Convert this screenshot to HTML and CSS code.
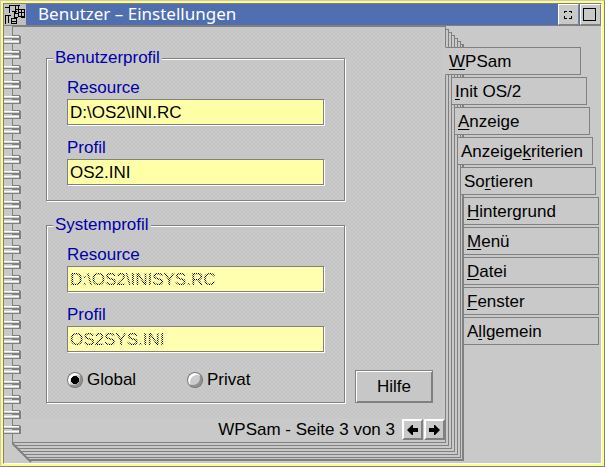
FILE: index.html
```html
<!DOCTYPE html>
<html lang="de">
<head>
<meta charset="utf-8">
<title>Benutzer – Einstellungen</title>
<link rel="stylesheet" href="styles.css">
</head>
<body>
<div class="window">
  <div class="frame">
    <header class="titlebar">
      <button class="sysmenu" type="button" aria-label="Systemmenü">
        <svg width="22" height="21" viewBox="0 0 22 21" shape-rendering="crispEdges" fill="none" stroke="#000">
          <path d="M5.500 1V9M5 1.500H16M1.500 20V11.500H7M1 3.500H5M11.500 1V9.500H14M11 5.500H20.500V13.500H16.500M14.500 1V12M14.500 8.500H19.500M14 12.500H19.500M7.500 7.500H13M10.500 7V13.500H13.500M7.500 14.500H12.500V20M7.500 14V20M7.500 17.500H12.500M7.500 19.500H12.500M4.500 11V19M17.500 5V12"/>
        </svg>
      </button>
      <h1 class="title">Benutzer – Einstellungen</h1>
      <button class="control" type="button" aria-label="Minimieren">
        <svg width="19" height="19" viewBox="0 0 19 19" shape-rendering="crispEdges" fill="none" stroke="#000">
          <path d="M5.500 8V6.500H8M10 6.500H12.500V8M12.500 11V13.500H10M8 13.500H5.500V11"/>
        </svg>
      </button>
      <button class="control" type="button" aria-label="Maximieren">
        <svg width="19" height="19" viewBox="0 0 19 19" shape-rendering="crispEdges" fill="none" stroke="#000">
          <path d="M2.500 3.500H14.500V15.500H2.500Z"/>
        </svg>
      </button>
    </header>

    <main class="notebook">
      <div class="book">
        <div class="sheet s6"></div>
        <div class="sheet s5"></div>
        <div class="sheet s4"></div>
        <div class="sheet s3"></div>
        <div class="sheet s2"></div>
        <div class="sheet s1"></div>
        <svg class="corner" width="20" height="20" viewBox="0 0 20 20" aria-hidden="true"><path d="M0 0L19 19" stroke="#808080" stroke-width="2"/></svg>
        <form class="page">
          <div class="content">
            <fieldset class="group">
              <legend>Benutzerprofil</legend>
              <label for="u-res">Resource</label>
              <div class="field"><input id="u-res" type="text" value="D:\OS2\INI.RC"></div>
              <label for="u-prof">Profil</label>
              <div class="field"><input id="u-prof" type="text" value="OS2.INI"></div>
            </fieldset>
            <div class="row">
              <fieldset class="group">
                <legend>Systemprofil</legend>
                <label for="s-res">Resource</label>
                <div class="field off"><input id="s-res" type="text" value="D:\OS2\INISYS.RC" disabled></div>
                <label for="s-prof">Profil</label>
                <div class="field off"><input id="s-prof" type="text" value="OS2SYS.INI" disabled></div>
                <div class="radios">
                  <label class="radio"><input type="radio" name="scope" checked>Global</label>
                  <label class="radio"><input type="radio" name="scope">Privat</label>
                </div>
              </fieldset>
              <button class="help" type="button">Hilfe</button>
            </div>
          </div>
          <footer class="pager">
            <span class="status">WPSam - Seite 3 von 3</span>
            <button class="arrow" type="button" aria-label="Vorherige Seite">
              <svg width="12" height="10" viewBox="0 0 12 10"><path d="M0 5L5 0H6V3H11V7H6V10H5Z"/></svg>
            </button>
            <button class="arrow" type="button" aria-label="Nächste Seite">
              <svg width="12" height="10" viewBox="0 0 12 10"><path d="M11 5L6 0H5V3H0V7H5V10H6Z"/></svg>
            </button>
          </footer>
        </form>
        <svg class="rings" width="18" height="405" shape-rendering="crispEdges" aria-hidden="true">
          <defs>
            <pattern id="ring" width="18" height="15" patternUnits="userSpaceOnUse">
              <path fill="#d4d4d4" d="M0 1H15V3H0ZM0 5H15V8H0Z"/>
              <path fill="#808080" d="M9 0H16V1H9ZM0 3H15V4H0ZM9 4H15V5H9ZM15 1H17V9H15ZM0 8H15V9H0Z"/>
              <path fill="#fff" d="M0 1H15V2H0ZM0 6H15V7H0Z"/>
            </pattern>
          </defs>
          <rect width="18" height="405" fill="url(#ring)"/>
        </svg>
      </div>

      <nav class="tabs">
        <a class="tab t0" href="#wpsam"><span><u>W</u>PSam</span></a>
        <a class="tab t1" href="#init"><span><u>I</u>nit OS/2</span></a>
        <a class="tab t2" href="#anzeige"><span><u>A</u>nzeige</span></a>
        <a class="tab t3" href="#kriterien"><span>Anzeige<u>k</u>riterien</span></a>
        <a class="tab t4" href="#sortieren"><span>So<u>r</u>tieren</span></a>
        <a class="tab" href="#hintergrund"><span><u>H</u>intergrund</span></a>
        <a class="tab" href="#menue"><span><u>M</u>enü</span></a>
        <a class="tab" href="#datei"><span><u>D</u>atei</span></a>
        <a class="tab" href="#fenster"><span><u>F</u>enster</span></a>
        <a class="tab" href="#allgemein"><span>A<u>l</u>lgemein</span></a>
      </nav>
    </main>
  </div>
</div>
</body>
</html>
```
FILE: styles.css
```css
:root {
  --face: #c9c9c9;
  --dark: #808080;
  --label: #0000a8;
}

* { box-sizing: border-box; }

body {
  margin: 0;
  background: var(--face);
  color: #000;
  font: 17px/20px "Liberation Sans", Arial, sans-serif;
}

button, input { font: inherit; color: inherit; }
button { padding: 0; border-radius: 0; }
svg { display: block; }

/* window frame */
.window {
  min-height: 100vh;
  display: flex;
  border: 1px solid;
  border-color: #c9c9c9 var(--dark) var(--dark) #c9c9c9;
  padding: 2px;
  background: repeating-conic-gradient(#ffff60 0 25%, #ffffa0 0 50%) 0 0 / 2px 2px;
}

.frame {
  flex: 1;
  display: flex;
  flex-direction: column;
  border: 1px solid;
  border-color: var(--dark) #fff #fff var(--dark);
  background: var(--face);
}

.titlebar {
  display: flex;
  height: 22px;
  border-bottom: 1px solid var(--dark);
  background: repeating-conic-gradient(#5068b8 0 25%, #5074a8 0 50%) 0 0 / 2px 2px;
}

.title {
  flex: 1;
  margin: 0;
  padding-left: 12px;
  color: #fff;
  font: 17px/20px "Noto Sans", sans-serif;
}

.sysmenu {
  width: 22px;
  border: 0;
  background: #c0c0c0;
}

.control {
  width: 21px;
  margin-left: 1px;
  border: 1px solid;
  border-color: #fff var(--dark) var(--dark) #fff;
  background: var(--face);
}

/* notebook */
.notebook {
  flex: 1;
  display: flex;
  padding: 0 0 20px 8px;
}

.book {
  position: relative;
  flex: 1;
  display: flex;
}

.sheet {
  position: absolute;
  width: 100%;
  height: 100%;
  border: 1px solid var(--dark);
  border-left: 0;
  background: var(--face);
}

.s1 { top: 3px; left: 3px; }
.s2 { top: 6px; left: 6px; }
.s3 { top: 9px; left: 9px; }
.s4 { top: 12px; left: 12px; }
.s5 { top: 15px; left: 15px; }
.s6 { top: 18px; left: 18px; border-width: 1px 2px 2px 0; }

.corner {
  position: absolute;
  top: 100%;
  left: 0;
}

.page {
  position: relative;
  flex: 1;
  display: flex;
  flex-direction: column;
  border: 1px solid var(--dark);
  background: var(--face);
}

.content {
  flex: 1;
  margin: 0 3px 0 10px;
  padding: 22px 7px 0 23px;
  background: repeating-conic-gradient(#c5c5c5 0 25%, #c9c9c9 0 50%) 0 0 / 4px 4px;
}

.rings {
  position: absolute;
  top: 9px;
  left: -8px;
}

/* groups */
.row {
  display: flex;
  align-items: flex-end;
  gap: 10px;
  margin-top: 15px;
}

.group {
  width: 299px;
  margin: 0;
  padding: 11px 20px 2px 20px;
  border: 1px solid var(--dark);
  box-shadow: 1px 1px #fff, inset 1px 1px #fff;
}

legend {
  height: 18px;
  margin-left: -14px;
  padding: 0 2px;
  background: #c7c7c7;
  color: var(--label);
  line-height: 18px;
}

.group label {
  display: block;
  color: var(--label);
}

.field {
  position: relative;
  margin: 1px 0 13px;
}

.field input {
  display: block;
  width: 100%;
  height: 26px;
  padding: 2px 2px 0;
  border: 1px solid var(--dark);
  border-radius: 0;
  outline: 0;
  box-shadow: 1px 1px #fff;
  background: repeating-conic-gradient(#ffff98 0 25%, #ffffb8 0 50%) 0 0 / 2px 2px;
}

/* halftone over disabled entries */
.off::after {
  content: "";
  position: absolute;
  inset: 2px;
  background: repeating-conic-gradient(#ffffa8 0 25%, transparent 0 50%) 0 0 / 2px 2px;
  pointer-events: none;
}

.off input:disabled { color: #000; }

.radios {
  display: flex;
  margin: 18px 0 10px;
}

.group .radio {
  display: flex;
  align-items: center;
  gap: 4px;
  width: 120px;
  color: #000;
}

.radio input {
  appearance: none;
  width: 16px;
  height: 16px;
  margin: 0;
  border: 1px solid;
  border-color: #808080 #707070 #707070 #808080;
  border-radius: 50%;
  background: #ccc;
  box-shadow: inset 2px 2px #fff, inset -2px -2px #909090;
}

.radio input:checked {
  background: radial-gradient(circle, #000 0 4px, #ccc 4px);
}

.help {
  width: 78px;
  height: 33px;
  border: 1px solid;
  border-color: var(--dark);
  box-shadow: inset 1px 1px #fff, inset -1px -1px var(--dark);
  background: #c7c7c7;
}

.pager {
  display: flex;
  justify-content: flex-end;
  align-items: center;
  gap: 1px;
  height: 24px;
  padding-bottom: 1px;
}

.status { margin-right: 6px; }

.arrow {
  display: flex;
  align-items: center;
  justify-content: center;
  width: 21px;
  height: 21px;
  border: 2px solid;
  border-color: #fff var(--dark) var(--dark) #fff;
  background: var(--face);
}

/* tabs */
.tabs {
  position: relative;
  display: flex;
  flex-direction: column;
  gap: 2px;
  width: 156px;
  margin-left: -1px;
  padding-top: 21px;
}

.tab {
  width: 136px;
  height: 28px;
  margin-left: 18px;
  padding: 4px 3px;
  border: 1px solid var(--dark);
  background: var(--face);
  color: #000;
  line-height: 20px;
  text-decoration: none;
}

.tab u { text-underline-offset: 2px; }

.t0 { margin-left: 0; border-left-color: var(--face); }
.t1 { margin-left: 6px; }
.t2 { margin-left: 9px; }
.t3 { margin-left: 12px; }
.t4 { margin-left: 15px; }
```
